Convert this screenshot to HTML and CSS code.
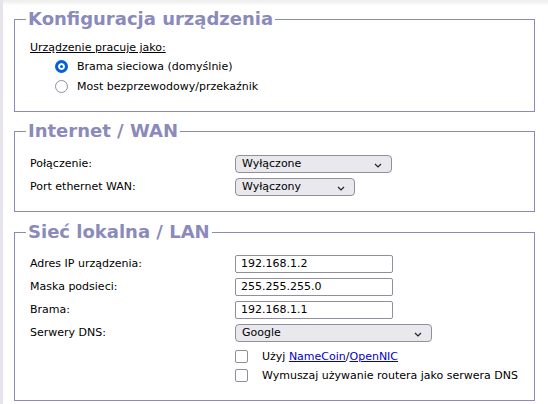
FILE: index.html
```html
<!doctype html>
<html>
<head>
<meta charset="utf-8">
<title>Konfiguracja</title>
<link rel="stylesheet" href="styles.css">
</head>
<body>
<div class="page">
	<fieldset class="box box1">
		<legend>Konfiguracja urządzenia</legend>
		<div class="tryb">Urządzenie pracuje jako:</div>
		<label class="opcja"><input type="radio" name="tryb" checked/>Brama sieciowa (domyślnie)</label>
		<label class="opcja"><input type="radio" name="tryb"/>Most bezprzewodowy/przekaźnik</label>
	</fieldset>

	<fieldset class="box box2">
		<legend>Internet / WAN</legend>
		<div class="wiersz">
			<span class="etykieta">Połączenie:</span>
			<select class="sel sel-dlugi"><option>Wyłączone</option></select>
		</div>
		<div class="wiersz">
			<span class="etykieta">Port ethernet WAN:</span>
			<select class="sel sel-krotki"><option>Wyłączony</option></select>
		</div>
	</fieldset>

	<fieldset class="box box3">
		<legend>Sieć lokalna / LAN</legend>
		<div class="wiersz">
			<span class="etykieta">Adres IP urządzenia:</span>
			<input class="pole" type="text" value="192.168.1.2"/>
		</div>
		<div class="wiersz">
			<span class="etykieta">Maska podsieci:</span>
			<input class="pole" type="text" value="255.255.255.0"/>
		</div>
		<div class="wiersz">
			<span class="etykieta">Brama:</span>
			<input class="pole" type="text" value="192.168.1.1"/>
		</div>
		<div class="wiersz">
			<span class="etykieta">Serwery DNS:</span>
			<select class="sel sel-dns"><option>Google</option></select>
		</div>
		<label class="check"><input type="checkbox"/><span>Użyj <a href="#">NameCoin</a>/<a href="#">OpenNIC</a></span></label>
		<label class="check"><input type="checkbox"/><span>Wymuszaj używanie routera jako serwera DNS</span></label>
	</fieldset>
</div>
</body>
</html>
```
FILE: styles.css
```css
*{
	margin:0px;
	padding:0px;
	box-sizing:border-box;
}
body{
	background:#fff;
	font-family:"DejaVu Sans",Verdana,sans-serif;
	font-size:11px;
	color:#000;
	border-left:3px solid #e8e4ee;
	height:404px;
	overflow:hidden;
}
.page{
	padding:8px 0 0 11px;
	background:linear-gradient(#ececec,#fff 6px) no-repeat;
	background-size:100% 8px;
}
.box{
	width:521px;
	border:1px solid #8a8abc;
	padding:0 0 0 11px;
	margin-bottom:8px;
}
legend{
	font-size:18px;
	font-weight:bold;
	color:#8a8abb;
	padding:0 2px;
	line-height:22px;
}
.box1{padding-bottom:15px;}
.box2{padding-bottom:13px;margin-bottom:9px;}
.box3{padding-bottom:15px;}
.tryb{
	margin:10px 0 0 4px;
	text-decoration:underline;
	line-height:16px;
}
.opcja{
	display:flex;
	align-items:center;
	height:20px;
	margin-left:29px;
}
.opcja input{
	appearance:none;
	width:13px;
	height:13px;
	border:1px solid #8f8f9d;
	border-radius:50%;
	margin-right:9px;
	background:#fff;
}
.opcja input:checked{
	border:3px solid #0060df;
	box-shadow:inset 0 0 0 2px #fff;
	background:#0060df;
}
.box2 .wiersz:first-of-type{margin-top:10px;}
.box3 .wiersz:first-of-type{margin-top:9px;}
.wiersz{
	display:flex;
	align-items:center;
	height:23px;
	margin-left:4px;
}
.etykieta{
	width:205px;
}
.sel{
	appearance:none;
	height:18px;
	border:1px solid #8f8f9d;
	border-radius:4px;
	background:#e9e9ed url("data:image/svg+xml,%3Csvg xmlns='http://www.w3.org/2000/svg' width='8' height='5'%3E%3Cpath d='M1 1l3 3 3-3' fill='none' stroke='%23222' stroke-width='1.2'/%3E%3C/svg%3E") no-repeat;
	font-family:"DejaVu Sans",Verdana,sans-serif;
	font-size:11px;
	padding:0 0 0 6px;
	color:#000;
}
.sel-dlugi{width:157px;background-position:138px 7px;}
.sel-krotki{width:120px;background-position:101px 7px;}
.sel-dns{width:197px;background-position:178px 7px;}
.pole{
	width:158px;
	height:18px;
	border:1px solid #8f8f9d;
	border-radius:2px;
	font-family:"DejaVu Sans",Verdana,sans-serif;
	font-size:11px;
	padding:0 0 0 5px;
	background:#fff;
}
.check{
	display:flex;
	align-items:center;
	height:19px;
	margin-left:209px;
}
.box3 .wiersz + .check{margin-top:3px;}
.check input{
	appearance:none;
	width:13px;
	height:13px;
	border:1px solid #8f8f9d;
	border-radius:2px;
	margin-right:14px;
	background:#fff;
}
.check a{
	color:#0000cc;
}
```
